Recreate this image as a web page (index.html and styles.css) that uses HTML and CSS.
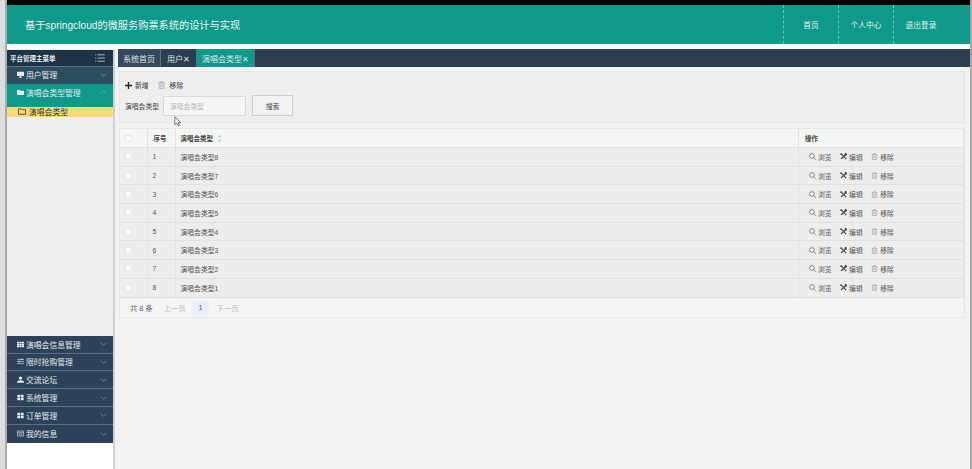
FILE: index.html
```html
<!DOCTYPE html>
<html lang="zh">
<head>
<meta charset="utf-8">
<title>购票系统</title>
<link rel="stylesheet" href="styles.css">
</head>
<body>
<svg class="defs" aria-hidden="true">
  <symbol id="i-search" viewBox="0 0 9 9"><circle cx="3.800" cy="3.800" r="3.100" stroke="#555" stroke-width=".8" fill="none"/><path d="M6 6l2.600 2.600" stroke="#555" stroke-width=".9"/></symbol>
  <symbol id="i-tool" viewBox="0 0 9 9"><path d="M2 .5L8.500 7.500 7.500 8.500 1 1.800z" fill="#444"/><path d="M0 1.500L1.500 0l1 1-1.500 1.500z" fill="#444"/><path d="M8.200.6L.8 7.200l1 1.200L8.600 2z" fill="#444"/><path d="M5.800 1.200A2 2 0 0 1 8.800.4L7.400 1.800l.8.800L9 1.300a2 2 0 0 1-2.400 2.400z" fill="#444"/></symbol>
  <symbol id="i-trash" viewBox="0 0 8 9"><path d="M.5 2h7M2.800 2V.7h2.400V2M1.300 2v6.300h5.400V2M3.200 3.500v3.500M4.800 3.500v3.500" stroke="#999" stroke-width=".7" fill="none"/></symbol>
  <symbol id="i-down" viewBox="0 0 10 6"><path d="M1 1l4 4 4-4" stroke="#8fa3b2" fill="none"/></symbol>
  <symbol id="i-grid4" viewBox="0 0 10 10"><path d="M.5 1h4v3.500h-4zM5.500 1h4v3.500h-4zM.5 5.500h4V9h-4zM5.500 5.500h4V9h-4z" fill="#e6ebef"/></symbol>
</svg>
<div class="frame">
  <div class="screen">
    <div class="blackbar"></div>
    <header class="top">
      <h1 class="brand">基于springcloud的微服务购票系统的设计与实现</h1>
      <nav class="topnav">
        <a class="topnav-item">首页</a>
        <a class="topnav-item">个人中心</a>
        <a class="topnav-item">退出登录</a>
      </nav>
    </header>
    <div class="body">
      <aside class="side">
        <div class="side-title"><span>平台管理主菜单</span>
          <svg class="ic-list" viewBox="0 0 12 10"><path d="M0 1h1.500M3 1h9M0 5h1.500M3 5h9M0 9h1.500M3 9h9" stroke="#d5dce2" fill="none"/></svg>
        </div>
        <div class="menu-item dark first"><svg class="ic" viewBox="0 0 10 10"><path d="M0 1h10v6H6v1.500h1.500V9.500h-5V8.500H4V7H0z" fill="#e6ebef"/></svg><span>用户管理</span><svg class="chev"><use href="#i-down"/></svg></div>
        <div class="menu-item teal"><svg class="ic" viewBox="0 0 10 10"><path d="M0 1.500h4l1 1h5v6H0z" fill="#e6f3f1"/></svg><span>演唱会类型管理</span><svg class="chev" viewBox="0 0 10 6"><path d="M1 5l4-4 4 4" stroke="#7cc4ba" fill="none"/></svg></div>
        <div class="submenu"><svg class="ic-folder" viewBox="0 0 12 10"><path d="M.7 1h3.800l1 1.300h5.800v6.900H.7z" stroke="#333" stroke-width="1.200" fill="none"/></svg><span>演唱会类型</span></div>
        <div class="side-fill"></div>
        <div class="menu-item dark"><svg class="ic" viewBox="0 0 10 10"><path d="M0 1h3v2.300H0zM3.500 1h3v2.300h-3zM7 1h3v2.300H7zM0 3.800h3v2.300H0zM3.500 3.800h3v2.300h-3zM7 3.800h3v2.300H7zM0 6.600h3v2.300H0zM3.500 6.600h3v2.300h-3zM7 6.600h3v2.300H7z" fill="#e6ebef"/></svg><span>演唱会信息管理</span><svg class="chev"><use href="#i-down"/></svg></div>
        <div class="menu-item dark"><svg class="ic" viewBox="0 0 10 10"><path d="M0 2h10M0 5h10M0 8h10" stroke="#cfd7dd"/><path d="M6 1h1.500v2H6zM2.500 4H4v2H2.500z" fill="#e6ebef"/></svg><span>限时抢购管理</span><svg class="chev"><use href="#i-down"/></svg></div>
        <div class="menu-item dark"><svg class="ic" viewBox="0 0 10 10"><circle cx="5" cy="3" r="2.400" fill="#e6ebef"/><path d="M0 9.500c0-2.500 2-3.500 5-3.500s5 1 5 3.500z" fill="#e6ebef"/></svg><span>交流论坛</span><svg class="chev"><use href="#i-down"/></svg></div>
        <div class="menu-item dark"><svg class="ic"><use href="#i-grid4"/></svg><span>系统管理</span><svg class="chev"><use href="#i-down"/></svg></div>
        <div class="menu-item dark"><svg class="ic"><use href="#i-grid4"/></svg><span>订单管理</span><svg class="chev"><use href="#i-down"/></svg></div>
        <div class="menu-item dark last"><svg class="ic" viewBox="0 0 10 10"><path d="M.5 1.500h9v7h-9zM.5 4h9M3 6.200h4" stroke="#d5dce2" fill="none"/></svg><span>我的信息</span><svg class="chev"><use href="#i-down"/></svg></div>
        <div class="side-bottom"></div>
      </aside>
      <main class="main">
        <div class="tabs">
          <span class="tab">系统首页</span>
          <span class="tab">用户✕</span>
          <span class="tab active">演唱会类型✕</span>
        </div>
        <section class="toolbar">
          <div class="tool-row">
            <span class="tool"><svg class="ic-plus" viewBox="0 0 8 8"><path d="M4 0v8M0 4h8" stroke="#222" stroke-width="1.600"/></svg>新增</span>
            <span class="tool"><svg class="ic-trash"><use href="#i-trash"/></svg>移除</span>
          </div>
          <div class="search-row">
            <label class="search-label">演唱会类型</label>
            <span class="search-input">演唱会类型</span>
            <span class="search-btn">搜索</span>
          </div>
        </section>
        <section class="table-box">
          <table class="grid">
            <thead>
              <tr>
                <th class="c-check"><i class="check"></i></th>
                <th class="c-num">序号</th>
                <th class="c-name">演唱会类型 <svg class="sort" viewBox="0 0 6 9"><path d="M3 0l2.500 3h-5zM3 9L.5 6h5z" fill="#c4c4c4"/></svg></th>
                <th class="c-act">操作</th>
              </tr>
            </thead>
            <tbody>
              <tr><td class="c-check"><i class="check"></i></td><td class="c-num">1</td><td class="c-name">演唱会类型8</td><td class="c-act"><span class="act"><svg class="ic-a"><use href="#i-search"/></svg>浏览</span><span class="act"><svg class="ic-a"><use href="#i-tool"/></svg>编辑</span><span class="act"><svg class="ic-a"><use href="#i-trash"/></svg>移除</span></td></tr>
              <tr><td class="c-check"><i class="check"></i></td><td class="c-num">2</td><td class="c-name">演唱会类型7</td><td class="c-act"><span class="act"><svg class="ic-a"><use href="#i-search"/></svg>浏览</span><span class="act"><svg class="ic-a"><use href="#i-tool"/></svg>编辑</span><span class="act"><svg class="ic-a"><use href="#i-trash"/></svg>移除</span></td></tr>
              <tr><td class="c-check"><i class="check"></i></td><td class="c-num">3</td><td class="c-name">演唱会类型6</td><td class="c-act"><span class="act"><svg class="ic-a"><use href="#i-search"/></svg>浏览</span><span class="act"><svg class="ic-a"><use href="#i-tool"/></svg>编辑</span><span class="act"><svg class="ic-a"><use href="#i-trash"/></svg>移除</span></td></tr>
              <tr><td class="c-check"><i class="check"></i></td><td class="c-num">4</td><td class="c-name">演唱会类型5</td><td class="c-act"><span class="act"><svg class="ic-a"><use href="#i-search"/></svg>浏览</span><span class="act"><svg class="ic-a"><use href="#i-tool"/></svg>编辑</span><span class="act"><svg class="ic-a"><use href="#i-trash"/></svg>移除</span></td></tr>
              <tr><td class="c-check"><i class="check"></i></td><td class="c-num">5</td><td class="c-name">演唱会类型4</td><td class="c-act"><span class="act"><svg class="ic-a"><use href="#i-search"/></svg>浏览</span><span class="act"><svg class="ic-a"><use href="#i-tool"/></svg>编辑</span><span class="act"><svg class="ic-a"><use href="#i-trash"/></svg>移除</span></td></tr>
              <tr><td class="c-check"><i class="check"></i></td><td class="c-num">6</td><td class="c-name">演唱会类型3</td><td class="c-act"><span class="act"><svg class="ic-a"><use href="#i-search"/></svg>浏览</span><span class="act"><svg class="ic-a"><use href="#i-tool"/></svg>编辑</span><span class="act"><svg class="ic-a"><use href="#i-trash"/></svg>移除</span></td></tr>
              <tr><td class="c-check"><i class="check"></i></td><td class="c-num">7</td><td class="c-name">演唱会类型2</td><td class="c-act"><span class="act"><svg class="ic-a"><use href="#i-search"/></svg>浏览</span><span class="act"><svg class="ic-a"><use href="#i-tool"/></svg>编辑</span><span class="act"><svg class="ic-a"><use href="#i-trash"/></svg>移除</span></td></tr>
              <tr><td class="c-check"><i class="check"></i></td><td class="c-num">8</td><td class="c-name">演唱会类型1</td><td class="c-act"><span class="act"><svg class="ic-a"><use href="#i-search"/></svg>浏览</span><span class="act"><svg class="ic-a"><use href="#i-tool"/></svg>编辑</span><span class="act"><svg class="ic-a"><use href="#i-trash"/></svg>移除</span></td></tr>
            </tbody>
          </table>
          <div class="pager">
            <span class="total">共 8 条</span>
            <span class="pg">上一页</span>
            <span class="pg-cur">1</span>
            <span class="pg">下一页</span>
          </div>
        </section>
        <svg class="cursor" viewBox="0 0 10 14"><path d="M1 1v10l2.500-2 1.500 3.500 1.700-.8L5.200 8.500H8.500z" fill="#fff" stroke="#333" stroke-width=".8"/></svg>
      </main>
    </div>
  </div>
</div>
</body>
</html>
```
FILE: styles.css
```css
* { box-sizing: border-box; }
html, body { margin: 0; height: 100%; }
body {
  background: #fff;
  font-family: "Liberation Sans", "Noto Sans CJK SC", sans-serif;
  font-size: 7px;
  color: #444;
  overflow: hidden;
}
.defs { display: none; }
.frame {
  width: 972px;
  height: 469px;
  padding-left: 5px;
  background: #dedede;
}
.screen {
  height: 100%;
  display: flex;
  flex-direction: column;
  background: #fff;
  border-left: 2px solid #aaa;
  border-right: 2px solid #a6a6a6;
}
.blackbar { height: 5px; background: #000; flex: none; }
.top {
  height: 39px;
  background: #0e998a;
  display: flex;
  align-items: center;
  justify-content: space-between;
  flex: none;
  padding-right: 22px;
}
.brand {
  margin: 0 0 0 18px;
  font-size: 10.2px;
  font-weight: 400;
  color: #e9f6f4;
}
.topnav { display: flex; height: 100%; }
.topnav-item {
  width: 55px;
  display: flex;
  align-items: center;
  justify-content: center;
  border-left: 1px dashed #6cc4ba;
  color: #e4f3f1;
  font-size: 7.7px;
}
.body { flex: 1; display: flex; padding-top: 5px; min-height: 0; }
.side {
  width: 106px;
  flex: none;
  display: flex;
  flex-direction: column;
  background: #efefef;
}
.side-title {
  height: 16px;
  margin-top: 1px;
  background: #1f3347;
  color: #e8edf1;
  font-size: 6.5px;
  font-weight: 700;
  display: flex;
  align-items: center;
  justify-content: space-between;
  padding: 0 8px 0 3px;
  flex: none;
}
.ic-list { width: 10px; height: 8px; }
.menu-item {
  height: 17.8px;
  flex: none;
  display: flex;
  align-items: center;
  padding: 0 6px 0 10px;
  font-size: 7.8px;
  color: #e3e8ec;
}
.menu-item span { flex: 1; margin-left: 2px; }
.menu-item.dark {
  background: #2c4259;
  border-bottom: 1px solid #5b7184;
}
.menu-item.last { border-bottom: 0; }
.menu-item.first {
  height: 18px;
  background: #2d4c5e;
  border-top: 1px solid #5b7a88;
  border-bottom: 0;
  padding-bottom: 2px;
}
.menu-item.teal {
  background: #0e998a;
  height: 23px;
  padding-bottom: 7px;
}
.ic { width: 7px; height: 7px; flex: none; }
.chev { width: 7px; height: 4px; flex: none; }
.submenu {
  height: 10px;
  background: #fbd978;
  display: flex;
  align-items: center;
  padding: 0 0 1px 11px;
  color: #333;
  font-size: 7.8px;
  flex: none;
}
.submenu span { margin-left: 3px; }
.ic-folder { width: 8px; height: 7px; }
.side-fill { flex: 1; }
.side-bottom { height: 26.500px; background: #fff; flex: none; }
.main {
  flex: 1;
  min-width: 0;
  border-left: 2px solid #d0d0d0;
  background: #f3f3f3;
  position: relative;
}
.tabs {
  height: 18px;
  background: #2c3e50;
  display: flex;
  font-size: 8px;
  color: #dfe4e8;
  margin-left: 3px;
}
.tab {
  padding: 0 6px;
  display: flex;
  align-items: center;
  border-right: 1px solid #5d7080;
  white-space: nowrap;
}
.tab:first-child { background: #34495e; padding: 0 5px; }
.tab.active { background: #0e998a; padding: 0 5px; }
.toolbar {
  margin: 4px 5px 0 4px;
  height: 52px;
  background: #eee;
  border: 1px solid #e6e6e6;
  padding: 7px 5px 0;
}
.tool-row { display: flex; gap: 9px; height: 12px; align-items: center; color: #333; font-size: 6.800px; }
.tool { display: flex; align-items: center; gap: 2px; }
.ic-plus { width: 7px; height: 7px; margin-right: 1px; }
.ic-trash { width: 7px; height: 8px; margin-right: 3px; }
.search-row { display: flex; align-items: center; margin-top: 4px; font-size: 6.800px; }
.search-label { width: 38px; color: #444; }
.search-input {
  width: 83px;
  height: 20px;
  background: #f5f5f5;
  border: 1px solid #d9d9d9;
  border-radius: 1px;
  display: flex;
  align-items: center;
  padding-left: 6px;
  color: #bbb;
}
.search-btn {
  width: 41px;
  height: 21px;
  margin-left: 6px;
  background: #f2f2f2;
  border: 1px solid #ccc;
  display: flex;
  align-items: center;
  justify-content: center;
}
.table-box {
  margin: 5px 5px 0 4px;
  background: #f5f5f5;
  border: 1px solid #e6e6e6;
  height: 190px;
}
.grid { width: 100%; border-collapse: collapse; table-layout: fixed; }
.grid th {
  height: 18.500px;
  background: #f5f5f5;
  font-weight: 700;
  font-size: 6.500px;
  color: #444;
  text-align: left;
  border-right: 1px solid #e2e2e2;
  border-bottom: 1px solid #e2e2e2;
  padding: 0 6px;
  white-space: nowrap;
}
.grid td {
  height: 18.700px;
  background: #ededed;
  font-size: 6.800px;
  color: #555;
  border-right: 1px solid #e2e2e2;
  border-bottom: 1px solid #e0e0e0;
  padding: 0 6px;
  white-space: nowrap;
}
.grid th.c-check, .grid td.c-check { width: 27px; padding: 0 0 0 5px; }
.grid .c-num { width: 28px; }
.grid td.c-num { padding-left: 5px; }
.grid .c-name { padding-left: 5px; }
.grid .c-act { width: 165px; }
.grid td.c-act { padding-left: 10px; }
.check { display: block; width: 7px; height: 7px; background: #fafafa; border: 1px solid #e8e8e8; }
.sort { width: 5px; height: 7px; margin-left: 2px; vertical-align: -1px; }
.act { display: inline-flex; align-items: center; margin-right: 8.500px; color: #555; }
.ic-a { width: 7px; height: 7px; margin-right: 2px; }
.pager { display: flex; align-items: center; height: 20px; padding-left: 10px; color: #bbb; font-size: 7.300px; }
.total { color: #666; margin-right: 11px; }
.pg-cur {
  margin: 0 8px 0 7px;
  width: 16px;
  height: 14px;
  background: #e8f1fb;
  color: #555;
  border-radius: 2px;
  display: flex;
  align-items: center;
  justify-content: center;
}
.cursor { position: absolute; left: 59px; top: 67px; width: 8px; height: 11px; }
```
